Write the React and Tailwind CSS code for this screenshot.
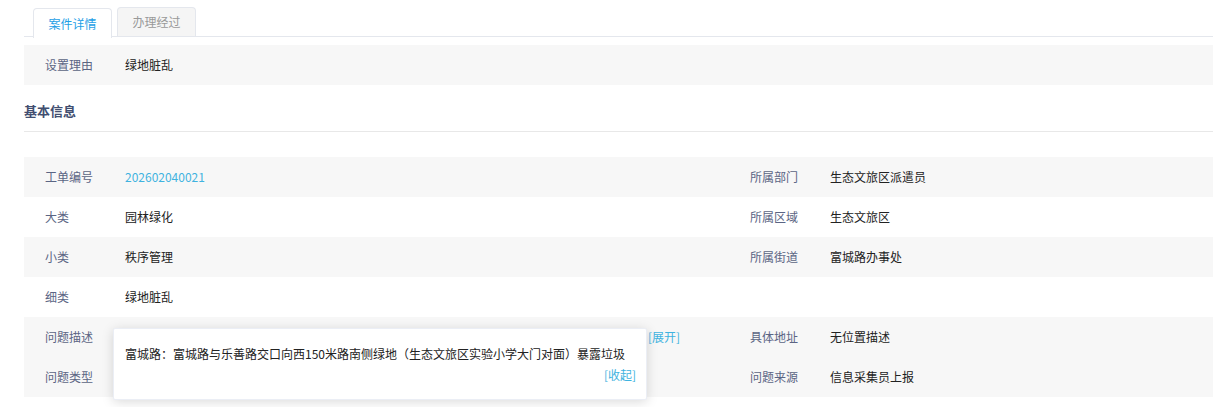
import React from 'react';

const Label = ({ children }) => (
    <span className="w-[80px] shrink-0 text-[#5b6584]">{children}</span>
);

const Row = ({ label, value, grey, link }) => (
    <div className={`flex items-center h-[40px] pl-[21px] ${grey ? 'bg-[#f7f7f7]' : ''}`}>
        {label && <Label>{label}</Label>}
        {value && <span className={link ? 'text-[#3fb3e0]' : 'text-[#222]'}>{value}</span>}
    </div>
);

export default function App() {
    return (
        <div className="bg-white w-[1213px] h-[407px] overflow-hidden pl-[24px] pt-[7px] text-[12px]" style={{ fontFamily: '"Noto Sans CJK SC", "Microsoft YaHei", sans-serif' }}>
            {/* tabs */}
            <div className="flex h-[30px] border-b border-[#e4e7ed] pl-[9px] gap-[5px]">
                <div className="w-[79px] h-[30px] flex items-center justify-center border border-b-0 border-[#e4e7ed] rounded-t-[4px] bg-white text-[#1ea0e6] relative top-[1px]">案件详情</div>
                <div className="w-[79px] h-[29px] flex items-center justify-center border border-b-0 border-[#e4e7ed] rounded-t-[4px] bg-[#f5f5f5] text-[#999]">办理经过</div>
            </div>

            <div className="mt-[8px]">
                <Row label="设置理由" value="绿地脏乱" grey />
            </div>

            <div className="pt-[18px] pb-[12px] border-b border-[#e8e8e8]">
                <h3 className="text-[13px] leading-[16px] font-bold text-[#414e70]">基本信息</h3>
            </div>

            <div className="mt-[25px] grid grid-cols-[705px_1fr]">
                <div className="flex flex-col">
                    <Row label="工单编号" value="202602040021" grey link />
                    <Row label="大类" value="园林绿化" />
                    <Row label="小类" value="秩序管理" grey />
                    <Row label="细类" value="绿地脏乱" />
                    <div className="relative bg-[#f7f7f7]">
                        <div className="flex items-center h-[40px] pl-[21px]">
                            <Label>问题描述</Label>
                            <span className="flex-1 truncate text-[#222]">富城路：富城路与乐善路交口向西150米路南侧绿地（生态文旅区实验小学大门对面）暴露垃圾</span>
                            <span className="text-[#3fb3e0] ml-[2px] mr-[49px]">[展开]</span>
                        </div>
                        <div className="flex items-center h-[40px] pl-[21px]">
                            <Label>问题类型</Label>
                        </div>
                        <div className="absolute left-[89px] top-[11px] w-[534px] h-[72px] bg-white border border-[#ebeef5] rounded-[2px] shadow-[0_2px_12px_0_rgba(0,0,0,0.15)] pl-[11px] pr-[10px] pt-[15px]">
                            <p className="text-[#222] leading-[20px]">富城路：富城路与乐善路交口向西150米路南侧绿地（生态文旅区实验小学大门对面）暴露垃圾</p>
                            <p className="text-right text-[#3fb3e0] leading-[16px] mt-[3px]">[收起]</p>
                        </div>
                    </div>
                </div>
                <div className="flex flex-col">
                    <Row label="所属部门" value="生态文旅区派遣员" grey />
                    <Row label="所属区域" value="生态文旅区" />
                    <Row label="所属街道" value="富城路办事处" grey />
                    <Row />
                    <div className="bg-[#f7f7f7]">
                        <Row label="具体地址" value="无位置描述" />
                        <Row label="问题来源" value="信息采集员上报" />
                    </div>
                </div>
            </div>
        </div>
    );
}
